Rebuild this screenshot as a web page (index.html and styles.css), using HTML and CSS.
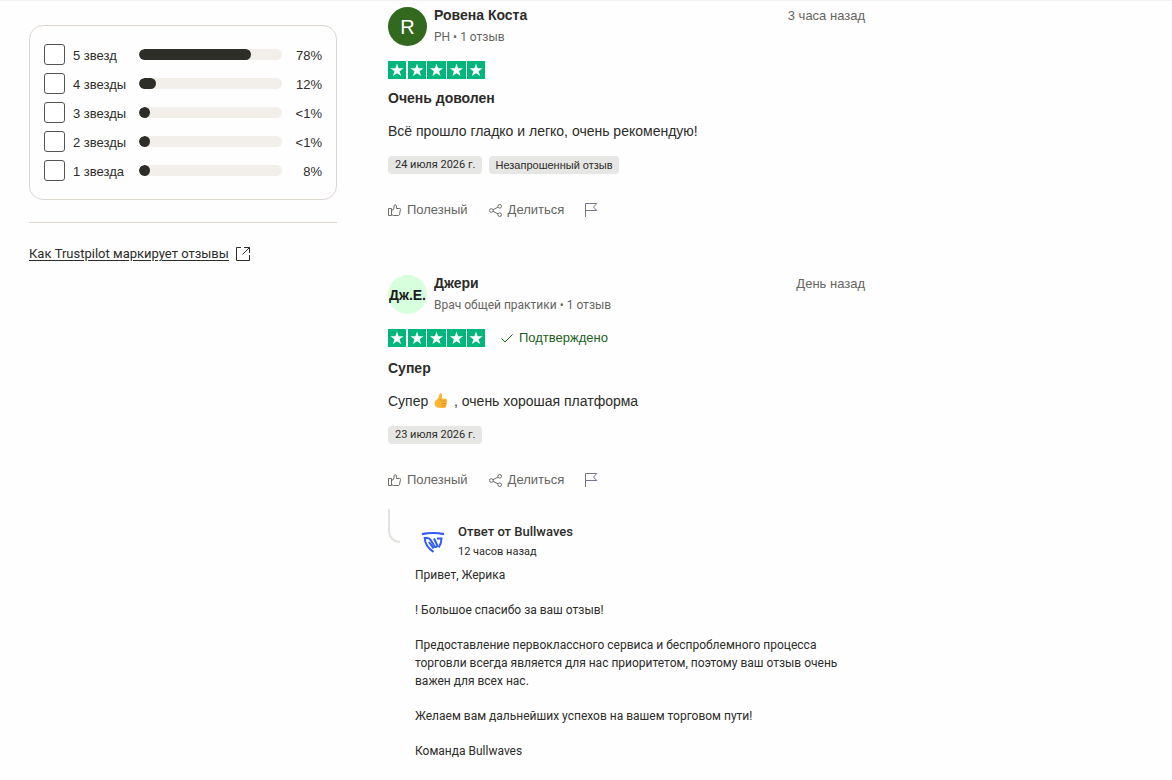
FILE: index.html
```
<!DOCTYPE html>
<html lang="ru">
<head>
<meta charset="utf-8">
<meta name="viewport" content="width=device-width, initial-scale=1">
<title>Отзывы Bullwaves</title>
<link rel="stylesheet" href="styles.css">
</head>
<body>
<svg class="defs" aria-hidden="true">
  <symbol id="stars" viewBox="0 0 97 18">
    <path fill="#00b67a" d="M0 0h18v18H0zM20 0h18v18H20zM39 0h19v18H39zM59 0h19v18H59zM79 0h18v18H79z"/>
    <g fill="#fff">
      <path id="star" d="M9 2.500l1.600 4.800h5l-4 3 1.500 4.800L9 12.200l-4.100 2.900 1.500-4.800-4-3h5z"/>
      <use href="#star" x="20"/><use href="#star" x="39.500"/><use href="#star" x="59.500"/><use href="#star" x="79"/>
    </g>
  </symbol>
  <symbol id="thumb" viewBox="0 0 13 13">
    <path fill="none" stroke="#6c6c66" d="M.5 4.500h3v7h-3zM3.500 6h1.500l1-2V2C6 .4 8.400.4 8.400 2v2.500h3.400c.5 0 .8.4.7.9l-1 5.100c-.1.600-.500 1-1.100 1H5.500l-2-1"/>
  </symbol>
  <symbol id="share" viewBox="0 0 13 13">
    <g fill="none" stroke="#6c6c66"><circle cx="2.300" cy="6.500" r="1.800"/><circle cx="10.700" cy="2.300" r="1.800"/><circle cx="10.700" cy="10.700" r="1.800"/><path d="M4 5.700l5-2.600M4 7.300l5 2.600"/></g>
  </symbol>
  <symbol id="flag" viewBox="0 0 13 15">
    <path fill="none" stroke="#77738a" d="M.5 14V.5h11.300L8.500 4l3.300 3.500H.5"/>
  </symbol>
</svg>
<div class="page">
  <aside class="sidebar">
    <form class="ratings">
      <div class="rating"><input class="check" type="checkbox" id="s5"><label class="rating-label" for="s5">5 звезд</label><span class="bar"><span class="fill" style="width:78%"></span></span><span class="percent">78%</span></div>
      <div class="rating"><input class="check" type="checkbox" id="s4"><label class="rating-label" for="s4">4 звезды</label><span class="bar"><span class="fill" style="width:12%"></span></span><span class="percent">12%</span></div>
      <div class="rating"><input class="check" type="checkbox" id="s3"><label class="rating-label" for="s3">3 звезды</label><span class="bar"><span class="fill" style="width:1%"></span></span><span class="percent">&lt;1%</span></div>
      <div class="rating"><input class="check" type="checkbox" id="s2"><label class="rating-label" for="s2">2 звезды</label><span class="bar"><span class="fill" style="width:1%"></span></span><span class="percent">&lt;1%</span></div>
      <div class="rating"><input class="check" type="checkbox" id="s1"><label class="rating-label" for="s1">1 звезда</label><span class="bar"><span class="fill" style="width:8%"></span></span><span class="percent">8%</span></div>
    </form>
    <div class="labels-info">
      <a class="labels-link" href="#labels"><span class="link-text">Как Trustpilot маркирует отзывы</span><svg class="external" viewBox="0 0 14 14" aria-hidden="true"><path fill="none" stroke="#2c2c28" d="M5 .5H.5v13h13V8M8 .5h5.500V6M13.500.5L6.500 7.500"/></svg></a>
    </div>
  </aside>
  <main class="reviews">
    <article class="review">
      <header class="author">
        <span class="avatar avatar-green">R</span>
        <div class="who"><a class="name" href="#rovena">Ровена Коста</a><span class="meta">PH • 1 отзыв</span></div>
        <time class="when">3 часа назад</time>
      </header>
      <div class="score"><svg class="stars" role="img" aria-label="5 из 5"><use href="#stars"/></svg></div>
      <h2 class="title">Очень доволен</h2>
      <p class="text">Всё прошло гладко и легко, очень рекомендую!</p>
      <div class="tags"><span class="tag tag-date">24 июля 2026 г.</span><span class="tag">Незапрошенный отзыв</span></div>
      <div class="actions">
        <button class="action" type="button"><svg class="icon"><use href="#thumb"/></svg>Полезный</button>
        <button class="action" type="button"><svg class="icon"><use href="#share"/></svg>Делиться</button>
        <button class="action" type="button" aria-label="Пожаловаться"><svg class="icon-flag"><use href="#flag"/></svg></button>
      </div>
    </article>
    <article class="review">
      <header class="author">
        <span class="avatar avatar-mint">Дж.Е.</span>
        <div class="who"><a class="name" href="#jerry">Джери</a><span class="meta">Врач общей практики • 1 отзыв</span></div>
        <time class="when">День назад</time>
      </header>
      <div class="score score-verified"><svg class="stars" role="img" aria-label="5 из 5"><use href="#stars"/></svg><span class="verified"><svg class="tick" viewBox="0 0 12 9" aria-hidden="true"><path fill="none" stroke="#1b5e20" d="M.5 4.500L4 8l7.500-7.500"/></svg>Подтверждено</span></div>
      <h2 class="title">Супер</h2>
      <p class="text">Супер <svg class="emoji" viewBox="0 0 16 16" role="img" aria-label="Палец вверх"><path fill="#fbb52f" d="M2 8c1.500-.8 3-2.300 3.700-4L6.600.8c.5-1 2.200-.6 2.500.7.200 1.500-.2 2.900-.5 4l4 .2c1.700.1 1.700 2 .8 2.500 1 .5.900 2-.1 2.400.8.700.4 2-.5 2.200.5.900-.1 2-1.300 2.100-3 .3-6.100.2-8-.9-2-.7-2.300-4.800-1.500-6z"/><path fill="none" stroke="#e7802a" stroke-width=".8" d="M8.500 8h4.900M8.500 10.600h4.800M8.500 12.900h4.200M8.700 5.600c-1 .5-1.500 1.300-1.500 2.400"/></svg> , очень хорошая платформа</p>
      <div class="tags"><span class="tag tag-date">23 июля 2026 г.</span></div>
      <div class="actions">
        <button class="action" type="button"><svg class="icon"><use href="#thumb"/></svg>Полезный</button>
        <button class="action" type="button"><svg class="icon"><use href="#share"/></svg>Делиться</button>
        <button class="action" type="button" aria-label="Пожаловаться"><svg class="icon-flag"><use href="#flag"/></svg></button>
      </div>
      <section class="reply">
        <span class="thread"></span>
        <div class="reply-main">
          <header class="reply-head">
            <svg class="logo" viewBox="0 0 24 22" role="img" aria-label="Bullwaves"><g fill="none" stroke="#315bf5" stroke-width="2"><path stroke-width="2.400" d="M1 3.200c6-1.500 16-1.500 22 0"/><path d="M12.500 20.800C7 17.500 4 13 3.700 7h2.500c1.800 0 2.900.8 3.800 2.400l3.300 5.700c1 1.600 3.600.6 2.700-1.400l-3-6.200M16 7.500h4.500c-.1 3.500-1 6.500-2.800 9M8 11l4.500 6.500"/></g></svg>
            <div class="reply-who"><strong class="reply-name">Ответ от Bullwaves</strong><time class="reply-time">12 часов назад</time></div>
          </header>
          <div class="reply-body">
            <p class="para">Привет, Жерика</p>
            <p class="para">! Большое спасибо за ваш отзыв!</p>
            <p class="para">Предоставление первоклассного сервиса и беспроблемного процесса торговли всегда является для нас приоритетом, поэтому ваш отзыв очень важен для всех нас.</p>
            <p class="para">Желаем вам дальнейших успехов на вашем торговом пути!</p>
            <p class="para">Команда Bullwaves</p>
          </div>
        </div>
      </section>
    </article>
  </main>
</div>
</body>
</html>
```
FILE: styles.css
```
* { box-sizing: border-box; }
body {
  margin: 0;
  border-top: 1px solid #f4f4f4;
  background: #fefefe;
  color: #2c2c28;
  font: 13px/18px "Liberation Sans", Arial, sans-serif;
}
.defs { position: absolute; width: 0; height: 0; }
.page {
  display: grid;
  grid-template-columns: minmax(240px, 308px) minmax(0, 477px);
  column-gap: 51px;
  padding: 0 29px;
}
.sidebar { padding-top: 24px; }
.ratings {
  display: flex;
  flex-direction: column;
  gap: 8px;
  padding: 18px 14px;
  border: 1px solid #dcd6d1;
  border-radius: 14px;
}
.rating {
  display: grid;
  grid-template-columns: 21px 74px 1fr 40px;
  align-items: center;
  height: 21px;
}
.rating-label { padding: 2px 0 0 8px; white-space: nowrap; }
.check {
  appearance: none;
  width: 21px;
  height: 21px;
  margin: 0;
  border: 1px solid #55554f;
  border-radius: 3px;
  background: #fff;
}
.bar { height: 11px; border-radius: 6px; background: #f2eeea; overflow: hidden; }
.fill { display: block; min-width: 11px; height: 11px; border-radius: 6px; background: #2c2e27; }
.percent { padding-top: 2px; text-align: right; }
.labels-info { margin-top: 22px; padding-top: 22px; border-top: 1px solid #dcd6d1; }
.labels-link {
  display: flex;
  align-items: center;
  gap: 7px;
  color: inherit;
  font-family: Roboto, sans-serif;
  text-decoration: none;
}
.link-text { text-decoration: underline; text-underline-offset: 2px; }
.external { width: 14px; height: 14px; }

.reviews { display: flex; flex-direction: column; gap: 56px; padding-top: 6px; }
.author { display: flex; gap: 7px; height: 39px; }
.avatar {
  display: grid;
  place-items: center;
  flex: none;
  width: 39px;
  height: 39px;
  border-radius: 50%;
  white-space: nowrap;
}
.avatar-green { background: #33691e; color: #fff; font-size: 20px; }
.avatar-mint { background: #d8ffdd; color: #1c1c1c; font-size: 14px; font-weight: bold; }
.who { display: flex; flex-direction: column; flex: 1; gap: 4px; }
.name { color: #2c2c28; font-size: 14px; line-height: 17px; font-weight: bold; text-decoration: none; }
.meta, .when { color: #65655f; }
.meta { font-family: Roboto, sans-serif; font-size: 12px; }
.score { display: flex; align-items: center; gap: 16px; height: 18px; margin-top: 15px; }
.stars { width: 97px; height: 18px; }
.verified { display: flex; align-items: center; gap: 6px; color: #1b5e20; }
.tick { width: 12px; height: 9px; }
.title { margin: 10px 0 0; font-size: 14px; line-height: 18px; }
.score-verified + .title { margin-top: 12px; }
.text { margin: 14px 0 0; font-size: 14px; line-height: 20px; }
.emoji { width: 16px; height: 16px; margin: 0 1px; vertical-align: -3px; }
.tags { display: flex; gap: 7px; margin-top: 15px; }
.tag { padding: 0 6px; border-radius: 4px; background: #e6e6e4; font-size: 11px; line-height: 18px; }
.tag-date { padding: 0 7px; font-family: Roboto, sans-serif; }
.actions { display: flex; gap: 21px; margin-top: 27px; }
.action {
  display: flex;
  align-items: center;
  gap: 6px;
  padding: 0;
  border: 0;
  background: none;
  color: #65655f;
  font: inherit;
}
.icon { width: 13px; height: 13px; }
.icon-flag { width: 13px; height: 15px; }

.reply { display: flex; gap: 15px; margin-top: 20px; font-family: Roboto, sans-serif; }
.thread {
  flex: none;
  width: 12px;
  height: 34px;
  border: solid #e3e3dd;
  border-width: 0 0 2px 2px;
  border-bottom-left-radius: 12px;
}
.reply-main { flex: 1; padding: 14px 15px 0 0; }
.reply-head { display: flex; align-items: center; gap: 13px; padding-left: 6px; }
.logo { width: 24px; height: 22px; }
.reply-who { display: flex; flex-direction: column; gap: 2px; }
.reply-name { font-size: 13px; font-weight: 500; }
.reply-time { font-size: 11px; }
.reply-body {
  display: flex;
  flex-direction: column;
  gap: 17px;
  margin-top: 5px;
  font-size: 12px;
}
.para { margin: 0; }
```
